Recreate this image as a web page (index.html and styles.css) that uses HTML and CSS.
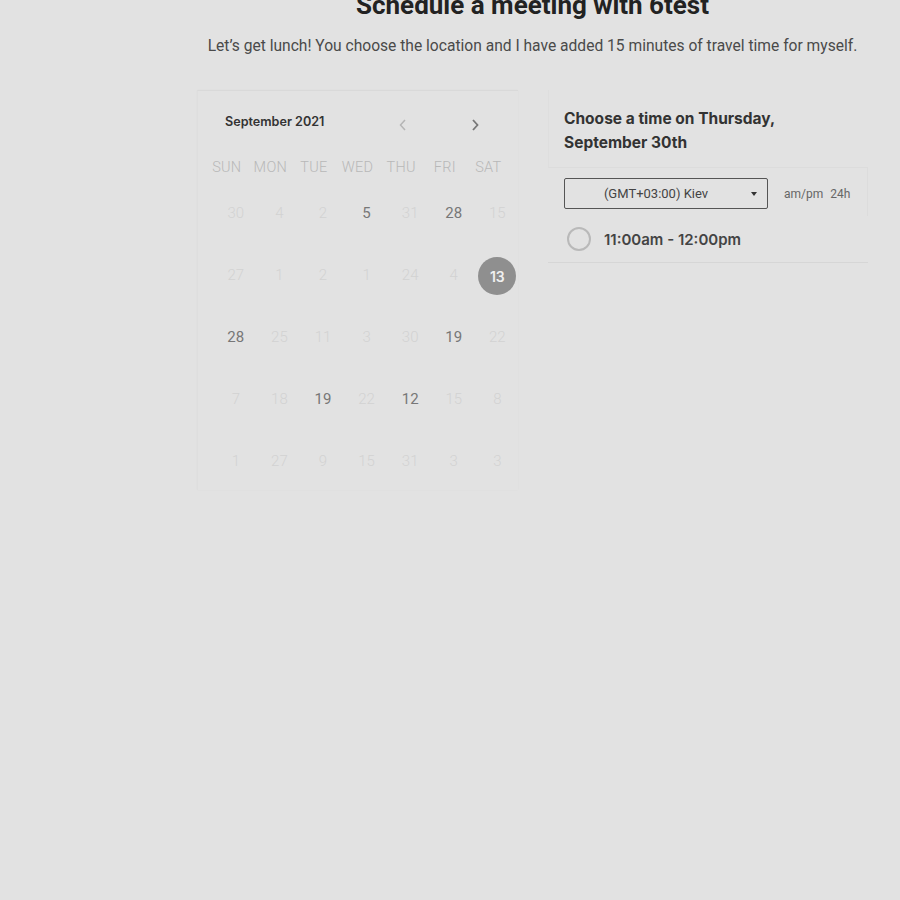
FILE: index.html
```html
<!DOCTYPE html>
<html>
<head>
<meta charset="utf-8">
<link rel="stylesheet" href="styles.css">
</head>
<body>
<div class="page">
  <header class="intro">
    <h1 class="title">Schedule a meeting with 6test</h1>
    <p class="subtitle">Let’s get lunch! You choose the location and I have added 15 minutes of travel time for myself.</p>
  </header>
  <main class="panels">
    <section class="calendar">
      <div class="cal-head">
        <span class="month">September 2021</span>
        <span class="nav prev"><svg width="10" height="14" viewBox="0 0 10 14"><path d="M7 2 L2.5 7 L7 12" fill="none" stroke="currentColor" stroke-width="1.5"/></svg></span>
        <span class="nav next"><svg width="10" height="14" viewBox="0 0 10 14"><path d="M3 2 L7.5 7 L3 12" fill="none" stroke="currentColor" stroke-width="1.8"/></svg></span>
      </div>
      <div class="weekdays">
        <span>SUN</span><span>MON</span><span>TUE</span><span>WED</span><span>THU</span><span>FRI</span><span>SAT</span>
      </div>
      <div class="days">
        <span class="d">30</span><span class="d">4</span><span class="d">2</span><span class="d on">5</span><span class="d">31</span><span class="d on">28</span><span class="d">15</span>
        <span class="d">27</span><span class="d">1</span><span class="d">2</span><span class="d">1</span><span class="d">24</span><span class="d">4</span><span class="d sel"><b>13</b></span>
        <span class="d on">28</span><span class="d">25</span><span class="d">11</span><span class="d">3</span><span class="d">30</span><span class="d on">19</span><span class="d">22</span>
        <span class="d">7</span><span class="d">18</span><span class="d on">19</span><span class="d">22</span><span class="d on">12</span><span class="d">15</span><span class="d">8</span>
        <span class="d">1</span><span class="d">27</span><span class="d">9</span><span class="d">15</span><span class="d">31</span><span class="d">3</span><span class="d">3</span>
      </div>
    </section>
    <section class="times">
      <div class="times-head">Choose a time on Thursday, September 30th</div>
      <div class="tz-row">
        <div class="tz-select"><span>(GMT+03:00) Kiev</span><i class="caret"></i></div>
        <div class="fmt"><span>am/pm</span><span>24h</span></div>
      </div>
      <div class="slot">
        <span class="radio"></span>
        <span class="slot-label">11:00am - 12:00pm</span>
      </div>
    </section>
  </main>
</div>
</body>
</html>
```
FILE: styles.css
```css
html, body {
  margin: 0;
  padding: 0;
  background: #e2e2e2;
}
body {
  width: 900px;
  height: 900px;
  overflow: hidden;
  font-family: Roboto, "Liberation Sans", sans-serif;
}
.page {
  margin-left: 190px;
  width: 685px;
}
.intro {
  text-align: center;
}
.title {
  margin: -10px 0 0;
  font-family: Roboto, sans-serif;
  font-weight: 700;
  font-size: 26px;
  line-height: 30px;
  color: #222;
}
.subtitle {
  margin: 17px 0 0;
  font-size: 15.6px;
  line-height: 18px;
  color: #4a4a4a;
}
.panels {
  display: flex;
  gap: 30px;
  margin-top: 35px;
  padding-left: 7px;
}
.calendar {
  width: 321px;
  height: 400px;
  box-sizing: border-box;
  border-top: 1px solid #d9d9d9;
  border-left: 1px solid #dedede;
  box-shadow: 0 0 2px rgba(0,0,0,0.03);
}
.cal-head {
  display: flex;
  align-items: center;
  height: 24px;
  margin-top: 22px;
  padding-left: 27px;
}
.month {
  font-family: Inter, sans-serif;
  font-weight: 600;
  font-size: 12.6px;
  color: #333;
  width: 173px;
  margin-top: -8px;
}
.nav {
  display: flex;
  width: 10px;
  height: 14px;
}
.prev { color: #b5b5b5; }
.next { color: #777; margin-left: 62px; }
.weekdays {
  display: grid;
  grid-template-columns: repeat(7, 43.6px);
  margin-top: 22px;
  padding-left: 7px;
  font-size: 14.5px;
  font-weight: 300;
  line-height: 18px;
  color: #b8b8b8;
  text-align: center;
  letter-spacing: 0.3px;
}
.days {
  display: grid;
  grid-template-columns: repeat(7, 43.6px);
  grid-auto-rows: 62px;
  margin-top: 5px;
  padding-left: 16px;
}
.d {
  display: flex;
  align-items: center;
  justify-content: center;
  font-size: 15px;
  color: #d2d2d2;
  font-weight: 300;
}
.d.on {
  color: #777;
  font-weight: 400;
}
.d.sel b {
  width: 38px;
  height: 38px;
  border-radius: 50%;
  background: #8f8f8f;
  color: #f0f0f0;
  display: flex;
  align-items: center;
  justify-content: center;
  font-family: Inter, sans-serif;
  font-weight: 600;
  font-size: 14px;
  margin-top: 2px;
}
.times {
  width: 320px;
}
.times-head {
  font-family: Inter, sans-serif;
  font-weight: 700;
  font-size: 15.5px;
  line-height: 24px;
  color: #333;
  padding: 17px 16px 12px 15px;
  border-bottom: 1px solid #dcdcdc;
  border-left: 1px solid #dedede;
}
.tz-row {
  display: flex;
  align-items: center;
  padding: 10px 16px 7px 16px;
  border-right: 1px solid #dcdcdc;
}
.tz-select {
  width: 204px;
  height: 31px;
  box-sizing: border-box;
  border: 1px solid #555;
  border-radius: 2px;
  display: flex;
  align-items: center;
  justify-content: center;
  position: relative;
  font-size: 13px;
  color: #444;
  padding-right: 20px;
}
.caret {
  position: absolute;
  right: 10px;
  top: 13px;
  width: 0;
  height: 0;
  border-left: 3.5px solid transparent;
  border-right: 3.5px solid transparent;
  border-top: 4px solid #333;
}
.fmt {
  display: flex;
  gap: 7px;
  margin-left: 16px;
  font-size: 12px;
  color: #666;
}
.slot {
  display: flex;
  align-items: center;
  height: 46px;
  padding-left: 19px;
  border-bottom: 1px solid #d6d6d6;
}
.radio {
  border: 2px solid #b9b9b9;
  border-radius: 50%;
  box-sizing: border-box;
  width: 24px;
  height: 24px;
}
.slot-label {
  margin-left: 13px;
  font-family: Inter, sans-serif;
  font-weight: 600;
  font-size: 15px;
  color: #444;
}
```
